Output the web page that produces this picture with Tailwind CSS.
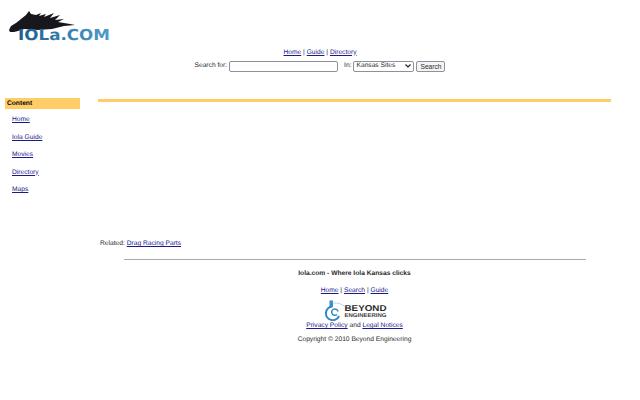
<!DOCTYPE html>
<html lang="en">
<head>
    <meta charset="UTF-8">
    <title>Iola.com</title>
    <script src="https://cdn.jsdelivr.net/npm/@tailwindcss/browser@4"></script>
</head>
<body class="bg-white h-[400px] w-[640px] overflow-hidden font-['Liberation_Sans',Arial,sans-serif] text-[6.67px] leading-[10px] text-[#2a2a2a] [text-rendering:geometricPrecision]">
    <header class="h-[47px] pl-[8px] pt-[10px]">
        <svg width="103" height="33" viewBox="0 0 103 33">
            <defs>
                <linearGradient id="logoBlue" x1="0" x2="1" y1="0" y2="0">
                    <stop offset="0" stop-color="#1d5f8e"/>
                    <stop offset="1" stop-color="#4f9ccb"/>
                </linearGradient>
            </defs>
            <path d="M1 20 L3 16 L8 13 L13 9 L18 5 L21 1 L23 4 L28 5 L33 3 L31 6 L38 4 L36 7 L46 3 L42 8 L52 5 L47 10 L56 9 L50 12 L62 14 L67 15 L56 16 L44 19 L30 20 L16 19 L10 21 L6 22 L2 22 Z" fill="#17171d"/>
            <text x="10" y="30" textLength="92" lengthAdjust="spacingAndGlyphs" font-family="DejaVu Sans" font-weight="700" font-size="15" fill="url(#logoBlue)">IOLa.COM</text>
        </svg>
    </header>

    <nav class="flex justify-center h-[10px] pt-[0.5px]">
        <span><a href="#" class="underline text-[#1a1a8c]">Home</a> | <a href="#" class="underline text-[#1a1a8c]">Guide</a> | <a href="#" class="underline text-[#1a1a8c]">Directory</a></span>
    </nav>

    <form class="flex justify-center items-center mt-[3px] h-[12px] gap-[2px]">
        <span>Search for:</span>
        <input type="text" class="w-[109px] h-[11px] border border-[#8f8f9d] rounded-[2px] bg-white">
        <span class="ml-[4px]">In:</span>
        <div class="w-[61px] h-[11px] border border-[#8f8f9d] rounded-[2px] flex items-center justify-between pl-[2px] pr-[2px]">
            <span>Kansas Sites</span>
            <svg width="6" height="4" viewBox="0 0 6 4"><path d="M0.5 0.5 L3 3 L5.5 0.5" stroke="#222" stroke-width="1.2" fill="none"/></svg>
        </div>
        <button type="button" class="w-[29px] h-[11px] border border-[#8f8f9d] rounded-[2px] bg-[#f5f5f5] leading-[9px]">Search</button>
    </form>

    <div class="flex mt-[23px] pl-[5px]">
        <aside class="w-[75px] shrink-0">
            <div class="h-[11px] mt-[3px] bg-[#ffcc66] pl-[2px] font-bold text-black leading-[12px]">Content</div>
            <ul class="mt-[6px] pl-[7px] flex flex-col gap-[7.5px]">
                <li><a href="#" class="underline text-[#1a1a8c]">Home</a></li>
                <li><a href="#" class="underline text-[#1a1a8c]">Iola Guide</a></li>
                <li><a href="#" class="underline text-[#1a1a8c]">Movies</a></li>
                <li><a href="#" class="underline text-[#1a1a8c]">Directory</a></li>
                <li><a href="#" class="underline text-[#1a1a8c]">Maps</a></li>
            </ul>
        </aside>

        <main class="ml-[18px] w-[513px]">
            <div class="h-[3px] mt-[4px] bg-[#ffcc66]"></div>
            <p class="mt-[137px] pl-[2px]">Related: <a href="#" class="underline text-[#1a1a8c]">Drag Racing Parts</a></p>
            <footer class="flex flex-col items-center text-center">
                <hr class="w-[462px] mt-[10px] border-0 h-[1px] bg-[#aaa]">
                <p class="mt-[9px] font-bold">Iola.com - Where Iola Kansas clicks</p>
                <p class="mt-[7px]"><a href="#" class="underline text-[#1a1a8c]">Home</a> | <a href="#" class="underline text-[#1a1a8c]">Search</a> | <a href="#" class="underline text-[#1a1a8c]">Guide</a></p>
                <svg width="64" height="21" viewBox="0 0 64 21" class="mt-[4px] translate-x-[0.5px]">
                    <path d="M6 0.5 L9.5 0.5 L9.5 6.5 L6 7.5 Z" fill="#3a8fca"/>
                    <path d="M9 6.5 A6.8 6.8 0 1 0 15.5 16" stroke="#2f88c4" stroke-width="2" fill="none"/>
                    <path d="M14.5 11.5 A3.2 3.2 0 1 0 13.5 14.5" stroke="#2f88c4" stroke-width="1.5" fill="none"/>
                    <path d="M9 3 Q16 2 21 6" stroke="#9cc7e4" stroke-width="0.7" fill="none"/>
                    <text x="21" y="11" textLength="42" lengthAdjust="spacingAndGlyphs" font-family="Liberation Sans" font-weight="700" font-size="8.5" fill="#2a2a2a">BEYOND</text>
                    <text x="21" y="17" textLength="42" lengthAdjust="spacingAndGlyphs" font-family="Liberation Sans" font-weight="700" font-size="5.5" fill="#3a3a3a">ENGINEERING</text>
                </svg>
                <p><a href="#" class="underline text-[#1a1a8c]">Privacy Policy</a> and <a href="#" class="underline text-[#1a1a8c]">Legal Notices</a></p>
                <p class="mt-[4px]">Copyright © 2010 Beyond Engineering</p>
            </footer>
        </main>
    </div>
</body>
</html>
